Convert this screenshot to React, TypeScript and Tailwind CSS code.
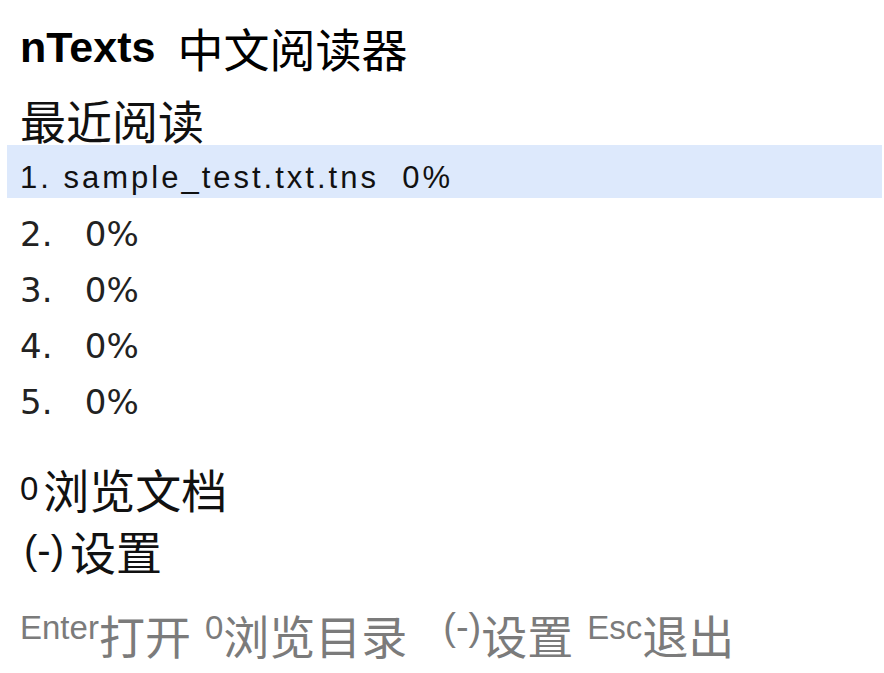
import React from 'react';

const cjk = "font-['Noto_Sans_CJK_SC',sans-serif]";
const latin = "font-['Liberation_Sans','Noto_Sans_CJK_SC',sans-serif]";
const dejavu = "font-['DejaVu_Sans',sans-serif]";

const recent = [
  { name: 'sample_test.txt.tns', progress: '0%' },
  { name: '', progress: '0%' },
  { name: '', progress: '0%' },
  { name: '', progress: '0%' },
  { name: '', progress: '0%' },
];

function Hint({ k, label, size = 'text-[33px]', gap }: { k: string; label: string; size?: string; gap: string }) {
  return (
    <span className={`flex items-center ${gap}`}>
      <span className={`${latin} ${size} leading-none mb-[14px]`}>{k}</span>
      <span className={`${cjk} text-[46px] leading-none`}>{label}</span>
    </span>
  );
}

export default function App() {
  return (
    <div className="w-[884px] h-[673px] bg-white overflow-hidden pt-[24px] text-[#111]">
      {/* title */}
      <div className="h-[46px] flex items-center pl-[20px]">
        <span className={`${latin} font-bold text-[43px] leading-none text-black`}>nTexts</span>
        <span className={`${cjk} text-[46px] leading-none ml-[22px] text-black`}>中文阅读器</span>
      </div>

      <div className={`mt-[26px] h-[46px] flex items-center pl-[20px] ${cjk} text-[46px] leading-none`}>
        最近阅读
      </div>

      {/* recent list */}
      {recent.map((item, i) =>
        i === 0 ? (
          <div
            key={i}
            className={`mt-[3px] ml-[7px] w-[875px] h-[53px] bg-[#dde9fc] flex items-center pt-[12px] pl-[13px] ${latin} text-[31px] tracking-[3px] leading-none whitespace-pre`}
          >
            {`${i + 1}. ${item.name}  ${item.progress}`}
          </div>
        ) : (
          <div
            key={i}
            className={`${i === 1 ? 'mt-[8px]' : ''} h-[56px] flex items-center pl-[20px] ${dejavu} text-[34px] leading-none whitespace-pre text-[#222]`}
          >
            {`${i + 1}. ${item.name}  ${item.progress}`}
          </div>
        )
      )}

      {/* menu */}
      <div className="mt-[35px] h-[46px] flex items-center pl-[20px]">
        <span className={`${latin} text-[33px] leading-none mr-[5px]`}>0</span>
        <span className={`${cjk} text-[46px] leading-none`}>浏览文档</span>
      </div>
      <div className="mt-[16px] h-[46px] flex items-center pl-[24px]">
        <span className={`${latin} text-[40px] leading-none mr-[6px]`}>(-)</span>
        <span className={`${cjk} text-[46px] leading-none`}>设置</span>
      </div>

      {/* footer hints */}
      <div className="mt-[38px] h-[46px] flex items-center pl-[20px] text-[#7b7b7b]">
        <Hint k="Enter" label="打开" gap="mr-[14px]" />
        <Hint k="0" label="浏览目录" gap="mr-[36px]" />
        <Hint k="(-)" label="设置" size="text-[38px]" gap="mr-[14px]" />
        <Hint k="Esc" label="退出" gap="" />
      </div>
    </div>
  );
}
